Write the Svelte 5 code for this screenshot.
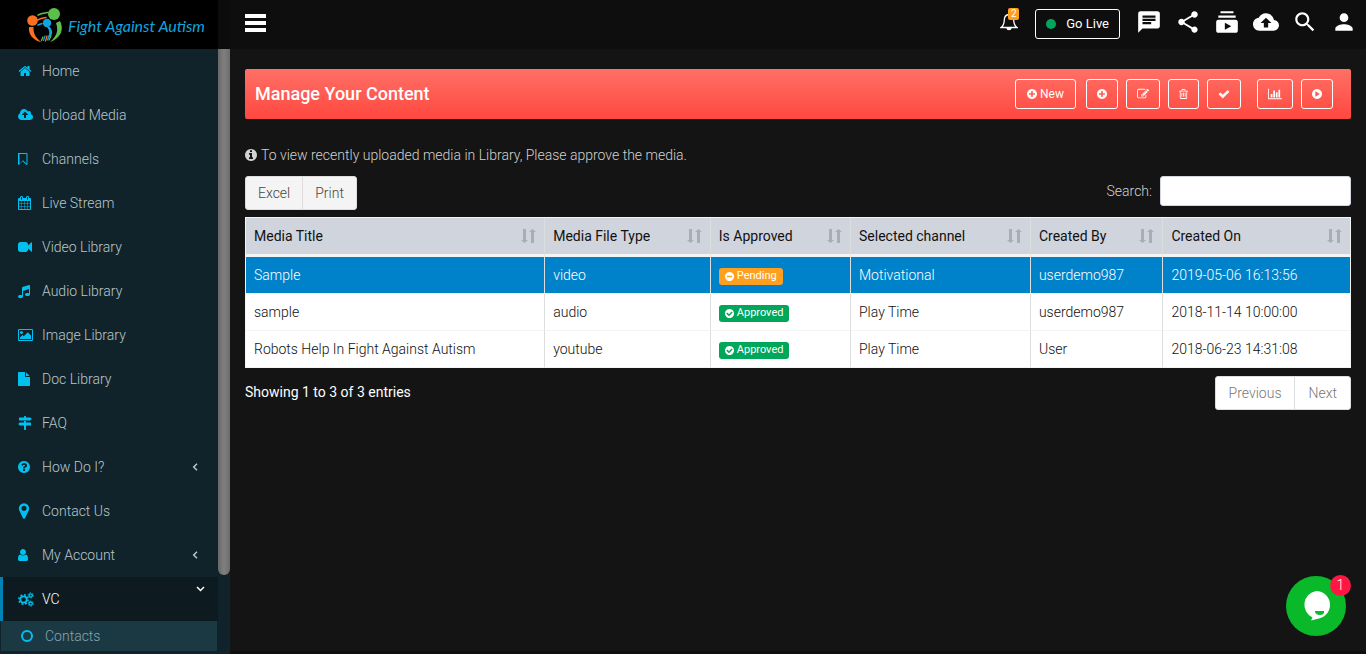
<script>
  const DISC = 'M1664 896q0 209-103 385.500t-279.500 279.500-385.500 103-385.500-103-279.500-279.500-103-385.500 103-385.500 279.500-279.500 385.500-103 385.500 103 279.500 279.500 103 385.500z';
  const ring = (d) => ({ d: d + DISC });
  const icons = {
    home: { d: 'M1472 992v480q0 26-19 45t-45 19h-384v-384h-256v384h-384q-26 0-45-19t-19-45v-480q0-1 .5-3t.5-3l575-474 575 474q1 2 1 6zm223-69l-62 74q-8 9-21 11h-3q-13 0-21-7l-692-577-692 577q-12 8-24 7-13-2-21-11l-62-74q-8-10-7-23.500t11-21.500l719-599q32-26 76-26t76 26l244 204v-195q0-14 9-23t23-9h192q14 0 23 9t9 23v408l219 182q10 8 11 21.500t-7 23.500z' },
    upload: { x: -64, w: 1920, d: 'M1216 864q0-14-9-23l-352-352q-9-9-23-9t-23 9l-351 351q-10 12-10 24 0 14 9 23t23 9h224v352q0 13 9.500 22.500t22.500 9.500h192q13 0 22.500-9.500t9.500-22.500v-352h224q13 0 22.500-9.500t9.500-22.500zm640 288q0 159-112.500 271.500t-271.500 112.500h-1088q-185 0-316.500-131.500t-131.500-316.500q0-130 70-240t188-165q-2-30-2-43 0-212 150-362t362-150q156 0 285.500 87t188.500 231q71-62 166-62 106 0 181 75t75 181q0 76-41 138 130 31 213.500 135.500t83.500 238.500z' },
    bookmark: { x: 256, w: 1280, d: 'M1344 256h-896v1242l448-430 448 430v-1242zm12-128q23 0 44 9 33 13 52.500 41t19.500 62v1289q0 34-19.500 62t-52.500 41q-19 8-44 8-48 0-83-32l-441-424-441 424q-36 33-83 33-23 0-44-9-33-13-52.500-41t-19.500-62v-1289q0-34 19.500-62t52.500-41q21-9 44-9h920z' },
    calendar: { x: 64, w: 1664, d: 'M192 1664h288v-288h-288v288zm352 0h320v-288h-320v288zm-352-352h288v-320h-288v320zm352 0h320v-320h-320v320zm-352-384h288v-288h-288v288zm736 736h320v-288h-320v288zm-384-736h320v-288h-320v288zm768 736h288v-288h-288v288zm-384-352h320v-320h-320v320zm-352-864v-288q0-13-9.500-22.500t-22.500-9.500h-64q-13 0-22.500 9.500t-9.500 22.500v288q0 13 9.500 22.500t22.500 9.500h64q13 0 22.500-9.500t9.500-22.500zm736 864h288v-320h-288v320zm-384-384h320v-288h-320v288zm384 0h288v-288h-288v288zm32-480v-288q0-13-9.500-22.500t-22.500-9.500h-64q-13 0-22.500 9.500t-9.500 22.500v288q0 13 9.500 22.500t22.500 9.500h64q13 0 22.500-9.500t9.500-22.500zm384-64v1280q0 52-38 90t-90 38h-1408q-52 0-90-38t-38-90v-1280q0-52 38-90t90-38h128v-96q0-66 47-113t113-47h64q66 0 113 47t47 113v96h384v-96q0-66 47-113t113-47h64q66 0 113 47t47 113v96h128q52 0 90 38t38 90z' },
    video: { d: 'M1792 352v1088q0 42-39 59-13 5-25 5-27 0-45-19l-403-403v166q0 119-84.500 203.500t-203.500 84.500h-704q-119 0-203.500-84.500t-84.500-203.500v-704q0-119 84.500-203.500t203.500-84.500h704q119 0 203.500 84.500t84.500 203.500v165l403-402q18-19 45-19 12 0 25 5 39 17 39 59z' },
    music: { x: 128, w: 1536, d: 'M1664 224v1120q0 50-34 89t-86 60.500-103.500 32-96.500 10.500-96.500-10.500-103.500-32-86-60.500-34-89 34-89 86-60.500 103.500-32 96.500-10.500q105 0 192 39v-537l-768 237v709q0 50-34 89t-86 60.500-103.500 32-96.500 10.500-96.500-10.500-103.500-32-86-60.500-34-89 34-89 86-60.500 103.500-32 96.500-10.500q105 0 192 39v-967q0-31 19-56.500t49-35.500l832-256q12-4 28-4 40 0 68 28t28 68z' },
    image: { x: -64, w: 1920, d: 'M576 576q0 80-56 136t-136 56-136-56-56-136 56-136 136-56 136 56 56 136zm1024 384v448h-1408v-192l320-320 160 160 512-512zm96-704h-1600q-13 0-22.500 9.500t-9.500 22.500v1216q0 13 9.500 22.500t22.500 9.500h1600q13 0 22.500-9.500t9.500-22.500v-1216q0-13-9.500-22.500t-22.500-9.500zm160 32v1216q0 66-47 113t-113 47h-1600q-66 0-113-47t-47-113v-1216q0-66 47-113t113-47h1600q66 0 113 47t47 113z' },
    file: { x: 128, w: 1536, d: 'M1152 512v-472q22 14 36 28l408 408q14 14 28 36h-472zm-128 32q0 40 28 68t68 28h544v1056q0 40-28 68t-68 28h-1344q-40 0-68-28t-28-68v-1600q0-40 28-68t68-28h800v544z' },
    signs: { d: 'M832 0h128q26 0 45 19t19 45v128h530q26 0 45 19l141 141q28 32 0 64l-141 141q-19 19-45 19H192q-26 0-45-19t-19-45V256q0-26 19-45t45-19h576V64q0-26 19-45t45-19zM768 640h256v192h576q26 0 45 19t19 45v256q0 26-19 45t-45 19h-576v512q0 26-19 45t-45 19H832q-26 0-45-19t-19-45v-512H238q-26 0-45-19L52 1056q-28-32 0-64l141-141q19-19 45-19h530z' },
    question: { x: 128, w: 1536, ...ring('M1024 1376v-192q0-14-9-23t-23-9h-192q-14 0-23 9t-9 23v192q0 14 9 23t23 9h192q14 0 23-9t9-23zm256-672q0-88-55.500-163t-138.500-116-170-41q-243 0-371 213-15 24 8 42l132 100q7 6 19 6 16 0 25-12 53-68 86-92 34-24 86-24 48 0 85.500 26t37.500 59q0 38-20 61t-68 45q-63 28-115.500 86.500t-52.500 125.500v36q0 14 9 23t23 9h192q14 0 23-9t9-23q0-19 21.500-49.500t54.500-49.500q32-18 49-28.500t46-35 44.500-48 28-60.500 12.500-81z') },
    marker: { x: 320, w: 1152, d: 'M1152 640q0-106-75-181t-181-75-181 75-75 181 75 181 181 75 181-75 75-181zm256 0q0 109-33 179l-364 774q-16 33-47.500 52t-67.500 19-67.500-19-46.500-52l-365-774q-33-70-33-179 0-212 150-362t362-150 362 150 150 362z' },
    user: { x: 256, w: 1280, d: 'M1536 1399q0 109-62.500 187t-150.500 78h-854q-88 0-150.500-78t-62.500-187q0-85 8.500-160.500t31.500-152 58.500-131 94-89 134.500-34.500q131 128 313 128t313-128q76 0 134.500 34.500t94 89 58.500 131 31.500 152 8.500 160.500zm-256-887q0 159-112.500 271.500t-271.500 112.500-271.500-112.500-112.500-271.500 112.500-271.500 271.500-112.500 271.500 112.500 112.500 271.500z' },
    plus: { x: 128, w: 1536, ...ring('M1344 960v-128q0-26-19-45t-45-19h-256v-256q0-26-19-45t-45-19h-128q-26 0-45 19t-19 45v256h-256q-26 0-45 19t-19 45v128q0 26 19 45t45 19h256v256q0 26 19 45t45 19h128q26 0 45-19t19-45v-256h256q26 0 45-19t19-45z') },
    edit: { d: 'M888 1184l116-116-152-152-116 116v56h96v96h56zm440-720q-16-16-33 1l-350 350q-17 17-1 33t33-1l350-350q17-17 1-33zm80 594v190q0 119-84.500 203.500t-203.500 84.500h-832q-119 0-203.500-84.500t-84.500-203.500v-832q0-119 84.500-203.500t203.500-84.500h832q63 0 117 25 15 7 18 23 3 17-9 29l-49 49q-14 14-32 8-23-6-45-6h-832q-66 0-113 47t-47 113v832q0 66 47 113t113 47h832q66 0 113-47t47-113v-126q0-13 9-22l64-64q15-15 35-7t20 29zm-96-738l288 288-672 672h-288v-288zm444 132l-92 92-288-288 92-92q28-28 68-28t68 28l152 152q28 28 28 68t-28 68z' },
    trash: { x: 192, w: 1408, d: 'M704 736v576q0 14-9 23t-23 9h-64q-14 0-23-9t-9-23v-576q0-14 9-23t23-9h64q14 0 23 9t9 23zm256 0v576q0 14-9 23t-23 9h-64q-14 0-23-9t-9-23v-576q0-14 9-23t23-9h64q14 0 23 9t9 23zm256 0v576q0 14-9 23t-23 9h-64q-14 0-23-9t-9-23v-576q0-14 9-23t23-9h64q14 0 23 9t9 23zm128 724v-948h-896v948q0 22 7 40.500t14.500 27 10.500 8.500h832q3 0 10.500-8.500t14.500-27 7-40.500zm-672-1076h448l-48-117q-7-9-17-11h-317q-10 2-17 11zm928 32v64q0 14-9 23t-23 9h-96v948q0 83-47 143.500t-113 60.500h-832q-66 0-113-58.500t-47-141.500v-952h-96q-14 0-23-9t-9-23v-64q0-14 9-23t23-9h309l70-167q15-37 54-63t79-26h320q40 0 79 26t54 63l70 167h309q14 0 23 9t9 23z' },
    check: { d: 'M1671 566q0 40-28 68l-724 724-136 136q-28 28-68 28t-68-28l-136-136-362-362q-28-28-28-68t28-68l136-136q28-28 68-28t68 28l294 295 656-657q28-28 68-28t68 28l136 136q28 28 28 68z' },
    chart: { w: 2048, d: 'M640 896v512h-256v-512h256zm384-512v1024h-256v-1024h256zm1024 1152v128h-2048v-1536h128v1408h1920zm-640-896v768h-256v-768h256zm384-384v1152h-256v-1152h256z' },
    play: { x: 128, w: 1536, ...ring('M1312 896q0 37-32 55l-544 320q-15 9-32 9-16 0-32-8-32-19-32-56v-640q0-37 32-56 33-18 64 1l544 320q32 18 32 55z') },
    info: { x: 128, w: 1536, ...ring('M1152 1376v-160q0-14-9-23t-23-9h-96v-512q0-14-9-23t-23-9h-320q-14 0-23 9t-9 23v160q0 14 9 23t23 9h96v320h-96q-14 0-23 9t-9 23v160q0 14 9 23t23 9h448q14 0 23-9t9-23zm-128-896v-160q0-14-9-23t-23-9h-192q-14 0-23 9t-9 23v160q0 14 9 23t23 9h192q14 0 23-9t9-23z') },
    approved: { x: 128, w: 1536, ...ring('M1412 734q0-28-18-46l-91-90q-19-19-45-19t-45 19l-408 407-226-226q-19-19-45-19t-45 19l-91 90q-18 18-18 46 0 27 18 45l362 362q19 19 45 19 27 0 46-19l543-543q18-18 18-45z') },
    pending: { x: 128, w: 1536, ...ring('M1344 960v-128q0-26-19-45t-45-19h-768q-26 0-45 19t-19 45v128q0 26 19 45t45 19h768q26 0 45-19t19-45z') },
  };

  const menu = [
    ['home', 'Home'], ['upload', 'Upload Media'], ['bookmark', 'Channels'], ['calendar', 'Live Stream'],
    ['video', 'Video Library'], ['music', 'Audio Library'], ['image', 'Image Library'], ['file', 'Doc Library'],
    ['signs', 'FAQ'], ['question', 'How Do I?', true], ['marker', 'Contact Us'], ['user', 'My Account', true],
  ];

  const topIcons = [
    ['Messages', 'M20 2H4c-1.100 0-1.990.9-1.990 2L2 22l4-4h14c1.100 0 2-.9 2-2V4c0-1.100-.9-2-2-2zM6 9h12v2H6V9zm8 5H6v-2h8v2zm4-6H6V6h12v2z'],
    ['Share', 'M18 16.080c-.76 0-1.440.3-1.960.77L8.910 12.700c.05-.23.09-.46.09-.7s-.04-.47-.09-.7l7.050-4.110c.54.5 1.250.81 2.040.81 1.660 0 3-1.340 3-3s-1.340-3-3-3-3 1.340-3 3c0 .24.04.47.09.7L8.040 9.810C7.500 9.310 6.790 9 6 9c-1.660 0-3 1.340-3 3s1.340 3 3 3c.79 0 1.500-.31 2.040-.81l7.120 4.160c-.05.21-.08.43-.08.65 0 1.610 1.310 2.920 2.920 2.920s2.920-1.310 2.920-2.920-1.310-2.920-2.920-2.920z'],
    ['Subscriptions', 'M20 8H4V6h16v2zm-2-6H6v2h12V2zm4 10v8c0 1.100-.9 2-2 2H4c-1.100 0-2-.9-2-2v-8c0-1.100.9-2 2-2h16c1.100 0 2 .9 2 2zm-6 4l-6-3.270v6.530L16 16z'],
    ['Upload', 'M19.350 10.040C18.670 6.590 15.640 4 12 4 9.110 4 6.600 5.640 5.350 8.040 2.340 8.360 0 10.910 0 14c0 3.310 2.690 6 6 6h13c2.760 0 5-2.240 5-5 0-2.640-2.050-4.780-4.650-4.960zM14 13v4h-4v-4H7l5-5 5 5h-3z'],
    ['Search', 'M15.500 14h-.79l-.28-.27C15.410 12.590 16 11.110 16 9.500 16 5.910 13.090 3 9.500 3S3 5.910 3 9.500 5.910 16 9.500 16c1.610 0 3.090-.59 4.230-1.570l.27.28v.79l5 4.990L20.490 19l-4.990-5zm-6 0C7.010 14 5 11.990 5 9.500S7.010 5 9.500 5 14 7.010 14 9.500 11.990 14 9.500 14z'],
    ['Profile', 'M12 12c2.210 0 4-1.790 4-4s-1.790-4-4-4-4 1.790-4 4 1.790 4 4 4zm0 2c-2.670 0-8 1.340-8 4v2h16v-2c0-2.660-5.330-4-8-4z'],
  ];

  const columns = [
    ['Media Title', '27.1%'], ['Media File Type', '15%'], ['Is Approved', '12.7%'],
    ['Selected channel', '16.3%'], ['Created By', '12%'], ['Created On', '16.9%'],
  ];
  const rows = [
    { title: 'Sample', type: 'video', ok: false, channel: 'Motivational', by: 'userdemo987', on: '2019-05-06 16:13:56' },
    { title: 'sample', type: 'audio', ok: true, channel: 'Play Time', by: 'userdemo987', on: '2018-11-14 10:00:00' },
    { title: 'Robots Help In Fight Against Autism', type: 'youtube', ok: true, channel: 'Play Time', by: 'User', on: '2018-06-23 14:31:08' },
  ];
  let selected = $state(0);
  let query = $state('');
  const shown = $derived(rows.filter((r) => Object.values(r).join(' ').toLowerCase().includes(query.toLowerCase())));
</script>

{#snippet icon(name, size = 14)}
  {@const i = icons[name]}
  <svg class="glyph" aria-hidden="true" height={size} width={Math.round(((i.w ?? 1792) / 1792) * size)} viewBox="{i.x ?? 0} 0 {i.w ?? 1792} 1792">
    <path fill="currentColor" fill-rule="evenodd" d={i.d} />
  </svg>
{/snippet}

<div class="shell">
  <aside class="side">
    <a class="brand" href="#home">
      <svg width="36" height="36" viewBox="0 0 36 36" aria-hidden="true" fill="none" stroke-linecap="round">
        <circle cx="5.500" cy="12.500" r="5.300" fill="#f97021" />
        <circle cx="27" cy="6" r="6" fill="#5cbf4a" />
        <circle cx="20" cy="15" r="4.200" fill="#12a5dd" />
        <path d="M21 4.500C16 5 13 6 11 7.200" stroke="#5cbf4a" stroke-width="1.500" />
        <path d="M19 9.500C14 10 12 11 10 12.300" stroke="#f97021" stroke-width="1.500" />
        <path d="M15 15.500l-4 1.500" stroke="#12a5dd" stroke-width="1.500" />
        <path d="M2 19c-1 7 4 13.500 13 15.500-6-4-9-9-8.500-15.500z" fill="#f97021" />
        <path d="M33 13c5 10-1 18-10 21 6-5 9-11 6-19z" fill="#5cbf4a" />
        <path d="M23 19c4 6 2 9-3 12 3-5 3-8 0-12z" fill="#12a5dd" />
        <path d="M16 29l-1.500 3.500M24 28l-2 4" stroke="#5cbf4a" stroke-width="1.300" />
        <path d="M20 28l-1.500 5" stroke="#f97021" stroke-width="1.300" />
        <path d="M18 28l-1.500 4.500M22.500 27l-2 5" stroke="#12a5dd" stroke-width="1.200" />
      </svg>
      <span>Fight Against Autism</span>
    </a>
    <div class="sidebody">
      <nav>
        {#each menu as [name, label, more]}
          <a class="item" href="#menu">
            <span class="slot">{@render icon(name, name === 'marker' ? 18 : 14)}</span>
            <span>{label}</span>
            {#if more}
              <svg class="chev" width="6" height="8" viewBox="0 0 6 8" aria-hidden="true"><path d="M5 .7L1.700 4 5 7.300" fill="none" stroke="currentColor" stroke-width="1.500" /></svg>
            {/if}
          </a>
        {/each}
        <a class="item open" href="#vc">
          <span class="slot">
            <svg width="16" height="15" viewBox="0 0 16 15" aria-hidden="true" fill="none" stroke="currentColor">
              <circle cx="5.500" cy="7.500" r="3.200" stroke-width="1.800" />
              <circle cx="5.500" cy="7.500" r="4.700" stroke-width="1.500" stroke-dasharray="1.850 1.840" />
              <circle cx="12.700" cy="3.400" r="1.600" stroke-width="1.300" />
              <circle cx="12.700" cy="3.400" r="2.600" stroke-width="1" stroke-dasharray="1.400 1.320" />
              <circle cx="12.700" cy="11.600" r="1.600" stroke-width="1.300" />
              <circle cx="12.700" cy="11.600" r="2.600" stroke-width="1" stroke-dasharray="1.400 1.320" />
            </svg>
          </span>
          <span>VC</span>
          <svg class="chev down" width="9" height="6" viewBox="0 0 9 6" aria-hidden="true"><path d="M1 1l3.500 3.500L8 1" fill="none" stroke="currentColor" stroke-width="1.500" /></svg>
        </a>
        <a class="sub" href="#contacts">
          <svg width="12" height="12" viewBox="0 0 12 12" aria-hidden="true"><circle cx="6" cy="6" r="5" fill="none" stroke="#00c0ef" stroke-width="2" /></svg>
          <span>Contacts</span>
        </a>
      </nav>
      <div class="track"><div class="thumb"></div></div>
    </div>
  </aside>

  <div class="page">
    <header class="top">
      <button class="burger" aria-label="Toggle navigation"><i></i><i></i><i></i></button>
      <div class="tools">
        <button class="bell" aria-label="Notifications">
          <svg width="18" height="19" viewBox="0 0 18 19" fill="none" stroke="#fff" stroke-width="1.300" aria-hidden="true">
            <path d="M9 2.500C5.500 2.800 4.300 5 4.300 8c0 4-1.200 5.800-3.300 7.500h16C14.900 13.800 13.700 12 13.700 8c0-3-1.200-5.200-4.700-5.500zM9 2.500V1" />
            <path d="M7 16c.2 2.300 3.800 2.300 4 0z" fill="#fff" />
          </svg>
          <span class="count">2</span>
        </button>
        <button class="live"><i></i>Go Live</button>
        {#each topIcons as [label, d]}
          <button class="tool" aria-label={label}><svg width="26" height="26" viewBox="0 0 24 24" aria-hidden="true"><path fill="#fff" d={d} /></svg></button>
        {/each}
      </div>
    </header>

    <main>
      <section class="banner">
        <h1>Manage Your Content</h1>
        <div class="actions">
          <button class="new">{@render icon('plus', 12)} New</button>
          <button aria-label="Add">{@render icon('plus', 12)}</button>
          <button aria-label="Edit">{@render icon('edit', 12)}</button>
          <button aria-label="Delete">{@render icon('trash', 12)}</button>
          <button class="approve" aria-label="Approve">{@render icon('check', 12)}</button>
          <button aria-label="Statistics">{@render icon('chart', 12)}</button>
          <button aria-label="Play">{@render icon('play', 12)}</button>
        </div>
      </section>

      <p class="note">{@render icon('info', 14)} To view recently uploaded media in Library, Please approve the media.</p>

      <div class="bar">
        <div class="group"><button>Excel</button><button>Print</button></div>
        <label class="search">Search: <input type="search" bind:value={query} /></label>
      </div>

      <table>
        <colgroup>{#each columns as [, w]}<col style="width:{w}" />{/each}</colgroup>
        <thead>
          <tr>
            {#each columns as [name]}
              <th>
                <div class="head">
                  {name}
                  <svg width="15" height="14" viewBox="0 0 15 14" aria-hidden="true"><path fill="#a9adb5" d="M2 0h3v11h2L3.500 14 0 11h2zM10 14h3V3h2l-3.500-3L8 3h2z" /></svg>
                </div>
              </th>
            {/each}
          </tr>
        </thead>
        <tbody>
          {#each shown as r, n}
            <tr class:selected={selected === n} onclick={() => (selected = n)}>
              <td>{r.title}</td>
              <td>{r.type}</td>
              <td><span class="tag" class:ok={r.ok}>{@render icon(r.ok ? 'approved' : 'pending', 11)} {r.ok ? 'Approved' : 'Pending'}</span></td>
              <td>{r.channel}</td>
              <td>{r.by}</td>
              <td>{r.on}</td>
            </tr>
          {/each}
        </tbody>
      </table>

      <div class="foot">
        <span>Showing 1 to 3 of 3 entries</span>
        <div class="group pager"><button>Previous</button><button>Next</button></div>
      </div>
    </main>
    <footer></footer>
  </div>

  <button class="chat" aria-label="Open chat">
    <svg width="30" height="32" viewBox="0 0 30 32" aria-hidden="true">
      <path fill="#fff" d="M15 1a14 14 0 0 1 14 14c0 7-5 12-11 13.500-3 .8-5 1.500-8 2l1.500-3A14 14 0 0 1 15 1z" />
      <path fill="#0ab92a" d="M14 21h9v2q-1 2-4 2-4 0-5-3z" />
    </svg>
    <span>1</span>
  </button>
</div>

<style>
  :global(body) { margin: 0; background: #141414; }
  .shell, .shell * { box-sizing: border-box; }
  .shell { display: flex; height: 100vh; overflow: hidden; font: 14px/20px Roboto, "Liberation Sans", sans-serif; color: #fff; font-weight: 300; }
  button, input { font: inherit; color: inherit; }
  button { background: none; border: 0; padding: 0; cursor: pointer; }
  a { color: inherit; text-decoration: none; }
  .glyph { flex: none; }

  .side { width: 230px; flex: none; display: flex; flex-direction: column; background: #0c0c0c; }
  .brand { height: 49px; flex: none; margin-right: 12px; padding: 2px 0 0 27px; background: #000; display: flex; align-items: center; gap: 5px; color: #12a5dd; font: italic 400 16px/20px Lato, sans-serif; white-space: nowrap; }
  .sidebody { flex: 1; min-height: 0; display: flex; background: #11232a; }
  nav { flex: 1; min-width: 0; overflow: hidden; color: #b8c7ce; background: #11232a; }
  .item { display: flex; align-items: center; height: 44px; padding: 0 20px 0 15px; border-left: 3px solid transparent; }
  .slot { width: 24px; display: flex; color: #00c0ef; }
  .chev { margin-left: auto; }
  .open { background: #0d1a1f; border-left-color: #0082b4; color: #fff; }
  .down { margin: 0 -7px 20px auto; }
  .sub { display: flex; align-items: center; gap: 12px; height: 30px; margin: 0 1px; padding-left: 20px; background: #1b3943; color: #8aa4af; }
  .track { width: 12px; background: #11232a; }
  .thumb { height: 87%; border-radius: 0 0 6px 6px; background: linear-gradient(90deg, #686868, #808080 50%, #6c6c6c); }

  .page { flex: 1; min-width: 0; display: flex; flex-direction: column; }
  .top { height: 49px; flex: none; background: #0e0e0e; display: flex; justify-content: space-between; padding: 0 9px 0 15px; }
  .burger { width: 21px; height: 18px; margin-top: 14px; display: flex; flex-direction: column; justify-content: space-between; }
  .burger i { width: 100%; height: 4px; background: #fff; }
  .tools { display: flex; align-items: center; height: 43px; }
  .bell { position: relative; display: flex; margin-right: 17px; }
  .count { position: absolute; top: -4px; right: -1px; width: 11px; height: 12px; border-radius: 2px; background: #ff9f1f; font-size: 10px; line-height: 12px; font-weight: 400; text-align: center; }
  .live { display: flex; align-items: center; gap: 10px; height: 30px; margin: 5px 16px 0 0; padding: 0 10px; border: 1px solid #fff; border-radius: 3px; font-size: 13px; font-weight: 400; }
  .live i { width: 10px; height: 10px; border-radius: 50%; background: #00a65a; }
  .tool { display: flex; margin-right: 13px; }
  .tool:last-child { margin-right: 0; }

  main { flex: 1; padding: 20px 15px 0; }
  .banner { height: 50px; display: flex; align-items: center; justify-content: space-between; padding: 0 18px 0 10px; border-radius: 2px; background: linear-gradient(#ff7066, #ff483f); }
  h1 { margin: 0; font-size: 18px; font-weight: 500; }
  .actions { display: flex; gap: 8px; }
  .actions button { display: flex; align-items: center; gap: 3px; height: 30px; padding: 0 10px; border: 1px solid #fff; border-radius: 3px; font-size: 12px; font-weight: 400; }
  .actions .new { margin-right: 2px; padding: 0 11px; }
  .actions .approve { margin-right: 8px; }
  .note { display: flex; align-items: center; gap: 4px; margin: 26px 0 11px; color: #d2d2d2; }
  .bar, .foot { display: flex; justify-content: space-between; }
  .group { display: flex; border: 1px solid #ddd; border-radius: 3px; overflow: hidden; background: #f4f4f4; color: #444; }
  .group button { height: 32px; padding: 0 12px; }
  .group button + button { border-left: 1px solid #ddd; }
  .search { display: flex; align-items: center; gap: 8px; height: 30px; color: #d2d2d2; }
  .search input { width: 191px; height: 30px; border: 1px solid #d2d6de; border-radius: 3px; background: #fff; color: #333; padding: 5px 10px; }

  table { width: 100%; margin-top: 7px; table-layout: fixed; border-collapse: separate; border-spacing: 0; background: #fff; color: #111; border: 1px solid #f4f4f4; border-bottom: 0; }
  th, td { text-align: left; padding: 0 8px; border-right: 1px solid #ddd; white-space: nowrap; }
  th:last-child, td:last-child { border-right: 0; }
  th { height: 39px; border-bottom: 3px solid #f4f4f4; background: #d0d4dd; font-weight: 400; }
  .head { display: flex; align-items: center; justify-content: space-between; }
  td { height: 37px; border-bottom: 1px solid #f4f4f4; }
  .selected td { background: #0082ca; color: #fff; }
  .tag { display: inline-flex; align-items: center; gap: 3px; height: 17px; padding: 0 6px; border-radius: 3px; background: #ff9f1f; color: #fff; font-size: 11px; font-weight: 400; vertical-align: middle; }
  .ok { background: #00a65a; }
  .foot { margin-top: 8px; line-height: 32px; font-weight: 400; }
  .pager { background: #fff; color: #777; font-weight: 300; }
  .pager button { padding: 0 13px; }
  footer { height: 3px; background: #0e0e0e; }

  .chat { position: fixed; right: 20px; bottom: 18px; width: 60px; height: 60px; border-radius: 50%; background: #0ab92a; display: flex; align-items: center; justify-content: center; }
  .chat span { position: absolute; top: -1px; right: -5px; width: 21px; height: 21px; border-radius: 50%; background: #ff1744; font-size: 14px; line-height: 21px; text-align: center; }
</style>
